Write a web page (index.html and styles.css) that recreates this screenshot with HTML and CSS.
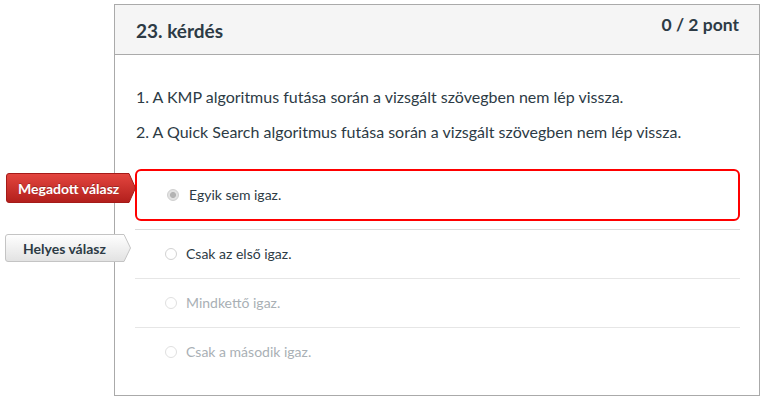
FILE: index.html
```html
<!DOCTYPE html>
<html lang="hu">
<head>
<meta charset="utf-8">
<title>23. kérdés</title>
<link rel="stylesheet" href="styles.css">
</head>
<body>
<div class="card">
  <div class="card-header">
    <h2 class="title">23. kérdés</h2>
    <div class="points">0 / 2 pont</div>
  </div>
  <div class="card-body">
    <p class="qtext">1. A KMP algoritmus futása során a vizsgált szövegben nem lép vissza.</p>
    <p class="qtext">2. A Quick Search algoritmus futása során a vizsgált szövegben nem lép vissza.</p>
    <div class="answers">
      <div class="answer selected">
        <div class="tag tag-given">
          <svg class="tag-shape" viewBox="0 0 130 30" preserveAspectRatio="none">
            <defs>
              <linearGradient id="gRed" x1="0" y1="0" x2="0" y2="1">
                <stop offset="0" stop-color="#e4463f"/>
                <stop offset="1" stop-color="#b21f1c"/>
              </linearGradient>
            </defs>
            <path d="M3 0.5 H123 L129.5 15 L123 29.5 H3 Q0.5 29.5 0.5 27 V3 Q0.5 0.5 3 0.5 Z" fill="url(#gRed)" stroke="#a51b18" stroke-width="1"/>
          </svg>
          <span class="tag-text">Megadott válasz</span>
        </div>
        <span class="radio checked"></span>
        <span class="atext">Egyik sem igaz.</span>
      </div>
      <div class="answer">
        <div class="tag tag-correct">
          <svg class="tag-shape" viewBox="0 0 126 28" preserveAspectRatio="none">
            <defs>
              <linearGradient id="gGray" x1="0" y1="0" x2="0" y2="1">
                <stop offset="0" stop-color="#ffffff"/>
                <stop offset="1" stop-color="#e2e2e2"/>
              </linearGradient>
            </defs>
            <path d="M3 0.5 H119 L125.5 14 L119 27.5 H3 Q0.5 27.5 0.5 25 V3 Q0.5 0.5 3 0.5 Z" fill="url(#gGray)" stroke="#c4c4c4" stroke-width="1"/>
          </svg>
          <span class="tag-text">Helyes válasz</span>
        </div>
        <span class="radio"></span>
        <span class="atext">Csak az első igaz.</span>
      </div>
      <div class="answer muted">
        <span class="radio"></span>
        <span class="atext">Mindkettő igaz.</span>
      </div>
      <div class="answer muted">
        <span class="radio"></span>
        <span class="atext">Csak a második igaz.</span>
      </div>
    </div>
  </div>
</div>
</body>
</html>
```

FILE: styles.css
```css
* { box-sizing: border-box; }

html, body {
  margin: 0;
  padding: 0;
  background: #fff;
}

body {
  font-family: Lato, "Noto Sans", "Liberation Sans", sans-serif;
  color: #2d3b45;
  width: 764px;
  height: 401px;
  overflow: hidden;
}

.card {
  margin: 4px 0 0 114px;
  width: 646px;
  height: 392px;
  border: 1px solid #aaaaaa;
}

.card-header {
  display: flex;
  justify-content: space-between;
  align-items: flex-start;
  height: 50px;
  background: #f5f5f5;
  border-bottom: 1px solid #aaaaaa;
  padding: 0 20px 0 21px;
}

.title {
  margin: 14px 0 0 0;
  font-size: 19px;
  line-height: 24px;
  font-weight: 700;
  color: #2d3b45;
}

.points {
  margin-top: 10px;
  font-size: 17.5px;
  line-height: 20px;
  font-weight: 700;
  color: #2d3b45;
}

.card-body {
  padding: 32px 19px 0 20px;
}

.qtext {
  margin: 0 0 15px 1px;
  font-size: 16px;
  line-height: 20px;
}

.answers {
  margin-top: 27px;
}

.answer {
  position: relative;
  display: flex;
  align-items: center;
  height: 49px;
  border-top: 1px solid #e6e6e6;
  padding-left: 30px;
  font-size: 14px;
}

.answer.selected {
  height: 52px;
  border: 2px solid #ff0000;
  border-radius: 6px;
  margin-bottom: 8px;
  padding-left: 30px;
}

.answer.selected + .answer {
  border-top-color: #dcdcdc;
}

.radio {
  flex: none;
  width: 12px;
  height: 12px;
  border-radius: 50%;
  border: 1px solid #d2d2d2;
  background: #fff;
  margin-right: 9px;
}

.radio.checked {
  border-color: #cfcfcf;
  background: radial-gradient(circle at center, #b3b3b3 0, #b3b3b3 2.6px, #e2e2e2 3.4px);
}

.selected .radio { margin-right: 10px; }

.atext {
  line-height: 16px;
}

.muted .atext { color: #a9b0b5; }
.muted .radio { border-color: #e0e0e0; }

.tag {
  position: absolute;
  display: flex;
  align-items: center;
}

.tag-shape {
  position: absolute;
  left: 0;
  top: 0;
  width: 100%;
  height: 100%;
}

.tag-text {
  position: relative;
  font-size: 14px;
  font-weight: 700;
  white-space: nowrap;
}

.tag-given {
  left: -131px;
  top: 2px;
  width: 130px;
  height: 30px;
  padding-left: 12px;
}

.tag-given .tag-text {
  color: #fff;
  text-shadow: 0 -1px 0 rgba(0,0,0,0.25);
}

.tag-correct {
  left: -130px;
  top: 4px;
  width: 126px;
  height: 28px;
  padding-left: 18px;
}

.tag-correct .tag-text {
  color: #2d3b45;
}
```
